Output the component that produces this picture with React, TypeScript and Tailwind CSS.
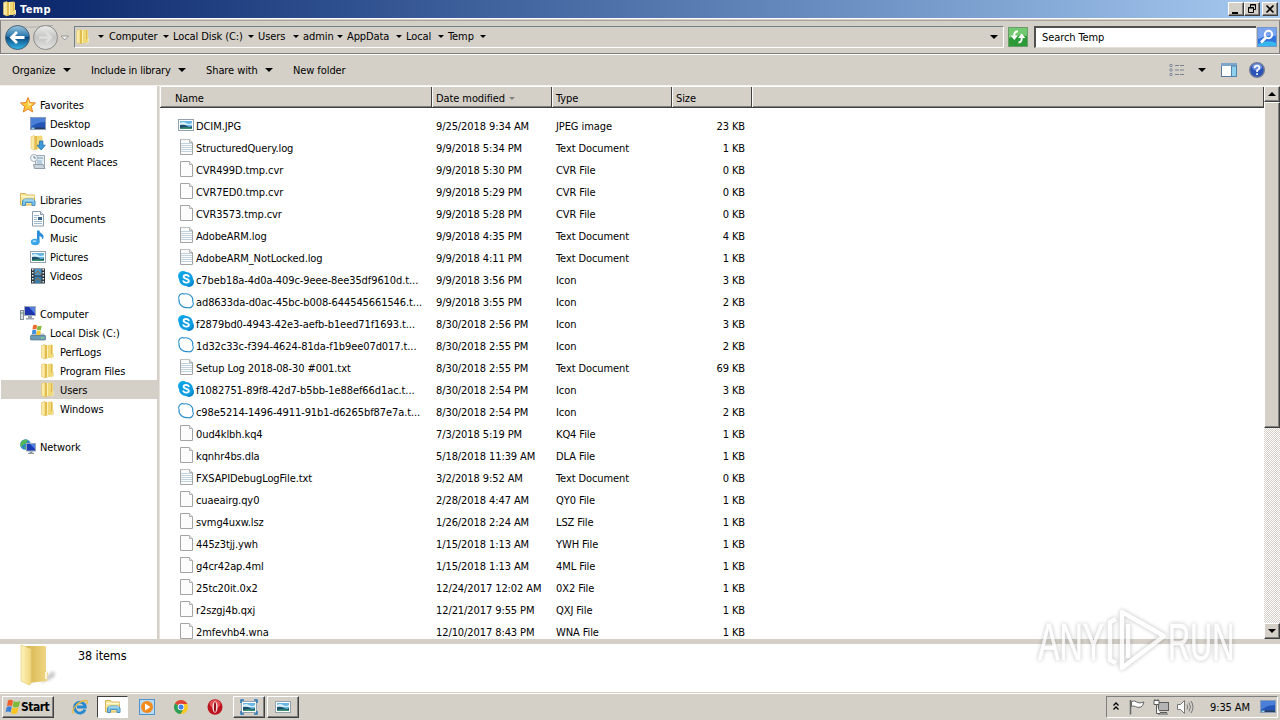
import React from 'react';

type IconName =
  | 'star' | 'desktop' | 'downloads' | 'recent' | 'libraries' | 'document' | 'music' | 'picture'
  | 'video' | 'computer' | 'disk' | 'folder' | 'network' | 'text' | 'blank' | 'skype' | 'skypeOutline';

const Icon: React.FC<{ name: IconName; className?: string }> = ({ name, className = '' }) => (
  <svg width="16" height="16" viewBox="0 0 16 16" className={`shrink-0 overflow-visible ${className}`}>
    {name === 'star' && (
      <>
        <path d="M8 .5l2 5 5.500.500-4.200 3.500 1.400 5.500L8 12l-4.700 3 1.400-5.500L.500 6 6 5.500z" fill="#fdc83c" stroke="#e5822a" strokeLinejoin="round" />
        <path d="M8 3l1.200 3.500 3.500.300L8 9z" fill="#fff0a8" />
      </>
    )}
    {name === 'desktop' && (
      <>
        <rect x="0.5" y="1.500" width="15" height="12" fill="#2456b8" stroke="#8a9cba" />
        <path d="M1 2h14v4Q7 6 1 11z" fill="#4a80d8" />
        <path d="M1 11.500h14V13H1z" fill="#2b3d5c" />
        <path d="M1.500 11.500h3V13h-3z" fill="#8fd4ef" />
      </>
    )}
    {name === 'folder' && (
      <>
        <path d="M1.500 1.500L5 .500v14.500l-3.500-1.500z" fill="#faeaa6" stroke="#e2c368" strokeWidth=".6" />
        <path d="M5 1h2.500v13.500L5 15z" fill="#e3bd4c" />
        <path d="M7.500 1l4-.500L13 1.500v11L11.500 14h-4z" fill="#f1d978" />
        <path d="M7.500 1v13" stroke="#fbf0ba" />
        <path d="M11.500 1v9" stroke="#dcb650" />
        <path d="M13.500 9v4.500l-2 1.500" fill="none" stroke="#efe6c0" />
      </>
    )}
    {name === 'downloads' && (
      <>
        <path d="M1 1.500L4.500.500v14.500L1 13.500z" fill="#faeaa6" stroke="#e2c368" strokeWidth=".6" />
        <path d="M4.500 1H7v13.500l-2.500.500z" fill="#e3bd4c" />
        <path d="M7 1l4-.500 1.500 1v11L11 14H7z" fill="#f1d978" />
        <path d="M9.500 6h3.400v4.200h2.400L11.200 15 7 10.200h2.500z" fill="#3f9ad8" stroke="#1e6fb4" strokeWidth=".8" />
      </>
    )}
    {name === 'recent' && (
      <>
        <path d="M5.500 1.500h9v11h-9z" fill="#e6edf2" stroke="#9aa8b2" />
        <path d="M3.500 10.500h9.500l2 4H4.500z" fill="#c9d4dc" stroke="#8f9eaa" />
        <path d="M7 7h5M7 9h5" stroke="#8ab0cc" />
        <path d="M8 3h5v2H8z" fill="#a6c2d5" />
        <circle cx="4" cy="4" r="3.500" fill="#f3f7fa" stroke="#a3b0b9" />
        <path d="M4 2v2h2" fill="none" stroke="#6f8494" />
      </>
    )}
    {name === 'libraries' && (
      <>
        <path d="M.500 1.500h5l1 1.500h8v10H.500z" fill="#f7e596" stroke="#d6b35a" />
        <path d="M1 4.500h13.500" stroke="#fff8d0" strokeWidth="1.500" />
        <path d="M2.500 13.500V9l2-2h8.500l2 2v4.500h-3v-3H5.500v3z" fill="#79c2e8" stroke="#4a91c2" />
        <path d="M4 8h10" stroke="#c8e9f8" />
      </>
    )}
    {name === 'document' && (
      <>
        <path d="M2.500.500h8l3 3v11.500h-11z" fill="#fff" stroke="#8b9cac" />
        <path d="M10.500.500v3h3" fill="#dde6ee" stroke="#8b9cac" />
        <path d="M4 4.500h5M4 6.500h3M4 8.500h3M4 10.500h8M4 12.500h8" stroke="#9db8d2" />
        <path d="M8 6h4v3H8z" fill="#35658f" />
      </>
    )}
    {name === 'music' && (
      <>
        <path d="M7 .500h2.500c0 3 4 3 4 6 0 1.500-.5 2.500-1.500 3 .5-2-.5-3-2.500-3.500V12.500H7z" fill="#2b8ed6" />
        <ellipse cx="5.200" cy="12" rx="4.300" ry="3.200" fill="#3ba4e6" />
        <ellipse cx="4.500" cy="11.200" rx="2" ry="1" fill="#a5dcf7" />
      </>
    )}
    {name === 'picture' && (
      <>
        <rect x="0.500" y="2.500" width="15" height="11" fill="#fff" stroke="#95a2ad" />
        <rect x="2" y="4" width="12" height="8" fill="#69b6e6" />
        <path d="M2 6q3-2 6 0t6 0v2H2z" fill="#d6eff9" />
        <path d="M2 8q4-1 7 1t5 0v3H2z" fill="#1d4f6c" />
        <path d="M2 11q5-1.500 12 0v1H2z" fill="#36926f" />
      </>
    )}
    {name === 'video' && (
      <>
        <rect x="1" y="0.500" width="14" height="15" fill="#28323a" />
        <rect x="4.500" y="1" width="7" height="6.500" fill="#4b97cc" />
        <rect x="4.500" y="8.500" width="7" height="6.500" fill="#377fae" />
        <path d="M5 6l3-3 3 4M5 13l3-3 3 4" stroke="#9c6a3c" fill="none" />
        <path d="M2.750 1v14M13.250 1v14" stroke="#e6edf0" strokeWidth="1.500" strokeDasharray="1.500 1.500" />
      </>
    )}
    {name === 'computer' && (
      <>
        <rect x="0.500" y="4.500" width="3" height="9" fill="#dbe0e5" stroke="#858f99" />
        <path d="M1 7h2" stroke="#4e9b55" />
        <rect x="4.500" y="0.500" width="11" height="9" fill="#1d35ae" stroke="#a6afbb" />
        <path d="M9 1h6v7z" fill="#537fe2" />
        <path d="M8 10h4v2H8zM6 12h8v1.500H6z" fill="#9aa3ad" />
      </>
    )}
    {name === 'disk' && (
      <>
        <path d="M2 8.500h12l1.500 3H.500z" fill="#b7c4cc" />
        <rect x="0.500" y="10.500" width="15" height="4.500" rx=".6" fill="#6a9ab4" stroke="#486778" strokeWidth=".6" />
        <path d="M11 13h3" stroke="#8bf27b" />
        <path d="M3 .500q2-1.500 4 0L6.500 4.500q-2-1-4 .200z" fill="#ee6a2b" />
        <path d="M7.600.800q2 1 4-.200L11 4.700q-2 1-4 0z" fill="#7fba3a" />
        <path d="M2.300 5.300q2-1 4 0L6 9.300q-2-1-4 .200z" fill="#3c8fdd" />
        <path d="M6.900 5.500q2 1 4-.100l-.5 4q-2 1-4 0z" fill="#fbc92c" />
      </>
    )}
    {name === 'network' && (
      <>
        <circle cx="5.500" cy="5.500" r="5.300" fill="#2f86cf" />
        <path d="M2 2q3-2.500 6-1L6 4.500 3 6 1 8.500Q-.5 4.500 2 2zM4 7.500l3 1-1 2.500z" fill="#55b855" />
        <rect x="6.500" y="4.500" width="9" height="7.500" fill="#1b3bb4" stroke="#9ba7b8" />
        <path d="M10 5h5v5z" fill="#4f7fe4" />
        <path d="M9.500 12.500h3V14h-3zM8 14h6v1H8z" fill="#8b96a2" />
      </>
    )}
    {(name === 'blank' || name === 'text') && (
      <>
        <path d="M2.500.500h9l3 3v12h-12z" fill="#fcfcfc" stroke="#a4a4a4" />
        <path d="M11.500.500v3h3" fill="#eee" stroke="#b4b4b4" />
      </>
    )}
    {name === 'text' && (
      <>
        <path d="M3 4.500h11M3 6.500h11M3 8.500h11M3 10.500h11M3 12.500h11" stroke="#c3d3dd" />
        <path d="M3.500 .500h10" stroke="#dcdcdc" strokeWidth="1.500" strokeDasharray="1 1" />
      </>
    )}
    {name === 'skype' && (
      <>
        <circle cx="5" cy="5" r="5" fill="#11aae9" />
        <circle cx="11" cy="11" r="5" fill="#0787cc" />
        <circle cx="8" cy="8" r="7" fill="#0d9fe2" />
        <path d="M10.800 5.400C9.800 3.400 5.600 3.500 5.600 5.800c0 2.600 5.300 1.400 5.300 4 0 2.400-4.600 2.400-5.600.3" stroke="#fff" strokeWidth="1.800" fill="none" strokeLinecap="round" />
      </>
    )}
    {name === 'skypeOutline' && (
      <path d="M1 6.500C-.5 3.500 2.500-.500 6 1c5-1 9.500 2.500 8.700 7 1.800 3.500-1.200 8-4.700 6.500C5 15.500.500 11.500 1 6.500z" fill="#fff" stroke="#2b8fca" strokeWidth="1.100" />
    )}
  </svg>
);

const Arrow: React.FC<{ className?: string; wide?: boolean }> = ({ className = '', wide }) => (
  <svg width={wide ? 8 : 6} height={wide ? 4 : 3} viewBox="0 0 8 4" className={`shrink-0 ${className}`}>
    <path d="M0 0h8L4 4z" fill="currentColor" />
  </svg>
);

const tree: ({ icon: IconName; label: string; indent: string; active?: boolean } | null)[] = [
  { icon: 'star', label: 'Favorites', indent: 'pl-5' },
  { icon: 'desktop', label: 'Desktop', indent: 'pl-[30px]' },
  { icon: 'downloads', label: 'Downloads', indent: 'pl-[30px]' },
  { icon: 'recent', label: 'Recent Places', indent: 'pl-[30px]' },
  null,
  { icon: 'libraries', label: 'Libraries', indent: 'pl-5' },
  { icon: 'document', label: 'Documents', indent: 'pl-[30px]' },
  { icon: 'music', label: 'Music', indent: 'pl-[30px]' },
  { icon: 'picture', label: 'Pictures', indent: 'pl-[30px]' },
  { icon: 'video', label: 'Videos', indent: 'pl-[30px]' },
  null,
  { icon: 'computer', label: 'Computer', indent: 'pl-5' },
  { icon: 'disk', label: 'Local Disk (C:)', indent: 'pl-[30px]' },
  { icon: 'folder', label: 'PerfLogs', indent: 'pl-10' },
  { icon: 'folder', label: 'Program Files', indent: 'pl-10' },
  { icon: 'folder', label: 'Users', indent: 'pl-10', active: true },
  { icon: 'folder', label: 'Windows', indent: 'pl-10' },
  null,
  { icon: 'network', label: 'Network', indent: 'pl-5' },
];

const files: [IconName, string, string, string, string][] = [
  ['picture', 'DCIM.JPG', '9/25/2018 9:34 AM', 'JPEG image', '23 KB'],
  ['text', 'StructuredQuery.log', '9/9/2018 5:34 PM', 'Text Document', '1 KB'],
  ['blank', 'CVR499D.tmp.cvr', '9/9/2018 5:30 PM', 'CVR File', '0 KB'],
  ['blank', 'CVR7ED0.tmp.cvr', '9/9/2018 5:29 PM', 'CVR File', '0 KB'],
  ['blank', 'CVR3573.tmp.cvr', '9/9/2018 5:28 PM', 'CVR File', '0 KB'],
  ['text', 'AdobeARM.log', '9/9/2018 4:35 PM', 'Text Document', '4 KB'],
  ['text', 'AdobeARM_NotLocked.log', '9/9/2018 4:11 PM', 'Text Document', '1 KB'],
  ['skype', 'c7beb18a-4d0a-409c-9eee-8ee35df9610d.t...', '9/9/2018 3:56 PM', 'Icon', '3 KB'],
  ['skypeOutline', 'ad8633da-d0ac-45bc-b008-644545661546.t...', '9/9/2018 3:55 PM', 'Icon', '2 KB'],
  ['skype', 'f2879bd0-4943-42e3-aefb-b1eed71f1693.t...', '8/30/2018 2:56 PM', 'Icon', '3 KB'],
  ['skypeOutline', '1d32c33c-f394-4624-81da-f1b9ee07d017.t...', '8/30/2018 2:55 PM', 'Icon', '2 KB'],
  ['text', 'Setup Log 2018-08-30 #001.txt', '8/30/2018 2:55 PM', 'Text Document', '69 KB'],
  ['skype', 'f1082751-89f8-42d7-b5bb-1e88ef66d1ac.t...', '8/30/2018 2:54 PM', 'Icon', '3 KB'],
  ['skypeOutline', 'c98e5214-1496-4911-91b1-d6265bf87e7a.t...', '8/30/2018 2:54 PM', 'Icon', '2 KB'],
  ['blank', '0ud4klbh.kq4', '7/3/2018 5:19 PM', 'KQ4 File', '1 KB'],
  ['blank', 'kqnhr4bs.dla', '5/18/2018 11:39 AM', 'DLA File', '1 KB'],
  ['text', 'FXSAPIDebugLogFile.txt', '3/2/2018 9:52 AM', 'Text Document', '0 KB'],
  ['blank', 'cuaeairg.qy0', '2/28/2018 4:47 AM', 'QY0 File', '1 KB'],
  ['blank', 'svmg4uxw.lsz', '1/26/2018 2:24 AM', 'LSZ File', '1 KB'],
  ['blank', '445z3tjj.ywh', '1/15/2018 1:13 AM', 'YWH File', '1 KB'],
  ['blank', 'g4cr42ap.4ml', '1/15/2018 1:13 AM', '4ML File', '1 KB'],
  ['blank', '25tc20it.0x2', '12/24/2017 12:02 AM', '0X2 File', '1 KB'],
  ['blank', 'r2szgj4b.qxj', '12/21/2017 9:55 PM', 'QXJ File', '1 KB'],
  ['blank', '2mfevhb4.wna', '12/10/2017 8:43 PM', 'WNA File', '1 KB'],
];

// label plus the width of the crumb, arrow included
const crumbs: [string, string][] = [
  ['Computer', 'w-[64px]'],
  ['Local Disk (C:)', 'w-[85px]'],
  ['Users', 'w-[45px]'],
  ['admin', 'w-[44px]'],
  ['AppData', 'w-[59px]'],
  ['Local', 'w-[42px]'],
  ['Temp', 'w-[42px]'],
];

const raised = 'bg-[#d4d0c8] border border-t-white border-l-white border-b-[#404040] border-r-[#404040] shadow-[inset_-1px_-1px_0_#808080]';

const TitleBar = () => (
  <div className="h-[18px] flex items-center pl-0.5 pr-0.5 bg-linear-to-r from-[#0a246a] to-[#a6caf0]">
    <Icon name="folder" />
    <span className="ml-0.5 text-white font-bold text-[11px] tracking-[0.4px]">Temp</span>
    <div className="ml-auto flex">
      <div className={`w-4 h-3.5 ${raised}`}>
        <svg width="14" height="12"><path d="M3 9h6v2H3z" /></svg>
      </div>
      <div className={`w-4 h-3.5 ${raised}`}>
        <svg width="14" height="12" fill="none" stroke="#000">
          <path d="M5.500 4V1.500h5v5H8.500M5 2h6M3.500 4.500h5v5h-5zM3 5h6" />
        </svg>
      </div>
      <div className={`w-4 h-3.5 ml-0.5 ${raised}`}>
        <svg width="14" height="12" stroke="#000" strokeWidth="1.600"><path d="M3.500 2.500l7 7M10.500 2.500l-7 7" /></svg>
      </div>
    </div>
  </div>
);

const AddressBar = () => (
  <div className="h-[36px] border-t border-white bg-[#d4d0c8]">
    <div className="h-[34px] mt-px flex items-center border border-r-[#808080] border-l-[#808080] border-t-[#a8a49c] border-b-[#808080] pl-[3px]">
      <svg width="72" height="30" viewBox="0 0 72 30" className="shrink-0 -mr-[2px]">
        <defs>
          <linearGradient id="back" x1="0" y1="0" x2="0" y2="1">
            <stop offset="0" stopColor="#9ac6e0" />
            <stop offset=".45" stopColor="#2a77ac" />
            <stop offset=".5" stopColor="#0b4a80" />
            <stop offset="1" stopColor="#35b8ea" />
          </linearGradient>
          <linearGradient id="fwd" x1="0" y1="0" x2="0" y2="1">
            <stop offset="0" stopColor="#ededeb" />
            <stop offset=".5" stopColor="#c4c4c2" />
            <stop offset="1" stopColor="#e4e4e2" />
          </linearGradient>
        </defs>
        <path d="M13 3.500Q26 7 41 3.500h8" stroke="#aeb0b0" fill="none" />
        <circle cx="13.500" cy="15.500" r="12" fill="url(#back)" stroke="#4b6479" />
        <path d="M20.500 15.500H8M13 10l-5.500 5.500L13 21" stroke="#fff" strokeWidth="2.800" fill="none" />
        <circle cx="41.500" cy="15.500" r="12" fill="url(#fwd)" stroke="#8b8b8b" />
        <path d="M35 15.500h11M42 10.500l5 5-5 5" stroke="#dededc" strokeWidth="2.500" fill="none" />
        <path d="M57 14h7.500l-3.750 4z" fill="#eee" stroke="#888" strokeWidth=".8" />
      </svg>
      <div className="w-[930px] h-[22px] flex items-center border-t border-l border-t-[#708088] border-l-[#708088] border-b border-b-white border-r border-r-white pb-px">
        <Icon name="folder" />
        <Arrow className="ml-[7px] mr-[5px]" />
        {crumbs.map(([label, width]) => (
          <div key={label} className={`${width} flex items-center justify-between pr-[5px] whitespace-nowrap`}>
            <span>{label}</span>
            <Arrow className="-mr-px" />
          </div>
        ))}
        <Arrow wide className="ml-auto mr-[5px]" />
      </div>
      <svg width="20" height="20" viewBox="0 0 20 20" className="ml-[4px] shrink-0">
        <rect x=".5" y=".5" width="19" height="19" fill="#2d9a38" stroke="#6c9c6c" />
        <path d="M1 1h18v8Q10 7 1 11z" fill="#73c96f" />
        <path d="M2.500 8.500h7.500L6.300 13zM10 11h7.500L13.700 6.500z" fill="#fff" />
        <path d="M10 4.500Q6 4 6.300 9M10.500 15.500q3.500 0 3.200-5" stroke="#fff" strokeWidth="2" fill="none" />
      </svg>
      <div className="ml-[6px] w-[222px] h-[22px] bg-white border-t-2 border-l-2 border-t-[#505050] border-l-[#505050] border-b border-b-[#e4e0d8] flex items-center pl-[6px]">
        Search Temp
      </div>
      <svg width="20" height="20" viewBox="0 0 20 20" className="ml-[1px] shrink-0">
        <rect x=".5" y=".5" width="19" height="19" fill="#3272dc" stroke="#7596cb" />
        <path d="M1 1h18v8Q10 8 1 12z" fill="#7aa5ee" />
        <path d="M1 19h18v-3Q10 12 1 17z" fill="#35b7ee" />
        <circle cx="11.500" cy="7.500" r="3.700" stroke="#fff" strokeWidth="2" fill="none" />
        <path d="M9 10.500L4 15.500" stroke="#fff" strokeWidth="2.600" />
      </svg>
    </div>
  </div>
);

const Toolbar = () => (
  <div className="h-[31px] flex items-center pl-3 pr-[15px] border-t border-white bg-[#d4d0c8]">
    <div className="w-[79px] flex items-center"><span className="w-[51px]">Organize</span><Arrow wide /></div>
    <div className="w-[115px] flex items-center"><span className="w-[87px] whitespace-nowrap tracking-[-0.200px]">Include in library</span><Arrow wide /></div>
    <div className="w-[87px] flex items-center"><span className="w-[59px] whitespace-nowrap">Share with</span><Arrow wide /></div>
    <span>New folder</span>
    <div className="ml-auto flex items-center">
      <svg width="16" height="14" viewBox="0 0 16 14" fill="none">
        <path d="M1 1.500h2v2H1zM1 6h2v2H1zM1 10.500h2v2H1z" fill="#fff" stroke="#7d8794" />
        <path d="M6 2.500h10M6 7h10M6 11.500h10" stroke="#78828f" strokeDasharray="4 1" />
      </svg>
      <Arrow wide className="ml-[13px]" />
      <svg width="16" height="14" viewBox="0 0 16 14" className="ml-[15px]">
        <rect x=".5" y=".5" width="15" height="13" fill="#fff" stroke="#58789c" />
        <path d="M0 0h16v3H0z" fill="#7fa5ca" />
        <rect x="10.500" y="3" width="5" height="10.500" fill="#8ed1ee" stroke="#4f83aa" />
      </svg>
      <svg width="16" height="16" viewBox="0 0 16 16" className="ml-[12px]">
        <circle cx="8" cy="8" r="7.300" fill="#2a52b8" stroke="#707b9c" strokeWidth="1.400" />
        <ellipse cx="8" cy="5" rx="5" ry="3.500" fill="#6e92e0" />
        <path d="M5.600 6q.2-2.300 2.500-2.300t2.300 2Q10.400 7 8.100 8.500V10M8.100 11.200v1.700" fill="none" stroke="#fff" strokeWidth="1.700" />
      </svg>
    </div>
  </div>
);

const Sidebar = () => (
  <div className="w-[157px] bg-white pt-[9px]">
    {tree.map((item, i) => (
      <div key={i} className={`h-[19px] ml-px flex items-center ${item?.active ? 'bg-[#d4d0c8]' : ''}`}>
        {item && (
          <div className={`flex items-center -ml-px whitespace-nowrap ${item.indent}`}>
            <Icon name={item.icon} />
            <span className="ml-1 pt-[2px]">{item.label}</span>
          </div>
        )}
      </div>
    ))}
  </div>
);

const headCell = 'h-full flex items-center border-r border-r-[#404040] border-l border-l-white pl-[3px] pt-0.5';

const FileList = () => (
  <div className="flex-1 bg-white overflow-hidden">
    <div className="h-[22px] flex bg-[#d4d0c8] border-t border-t-white border-b border-b-[#404040] shadow-[inset_0_-1px_0_#808080]">
      <div className="w-[272px] h-full flex items-center border-r border-r-[#404040] border-l border-l-white pl-3.5 pt-0.5">Name</div>
      <div className={`${headCell} w-[120px]`}>Date modified <Arrow className="ml-[4px] text-[#808080]" /></div>
      <div className={`${headCell} w-[120px]`}>Type</div>
      <div className={`${headCell} w-[80px]`}>Size</div>
      <div className={`${headCell} flex-1`} />
    </div>
    <div className="pt-[7px]">
      {files.map(([icon, name, date, type, size]) => (
        <div key={name} className="h-[22px] flex items-center whitespace-nowrap">
          <div className="w-[276px] pl-[18px] flex items-center">
            <Icon name={icon} className="-mt-px mb-px" />
            <span className="ml-0.5">{name}</span>
          </div>
          <div className="w-[120px]">{date}</div>
          <div className="w-[120px]">{type}</div>
          <div className="w-[69px] text-right">{size}</div>
        </div>
      ))}
    </div>
  </div>
);

const ScrollBar = () => (
  <div className="w-4 flex flex-col bg-[repeating-conic-gradient(#d4d0c8_0_25%,#ffffff_0_50%)] bg-[length:2px_2px]">
    <div className={`h-4 flex items-center justify-center ${raised}`}><Arrow wide className="rotate-180" /></div>
    <div className={`h-[326px] ${raised}`} />
    <div className={`h-4 mt-auto flex items-center justify-center ${raised}`}><Arrow wide /></div>
  </div>
);

const StatusPane = () => (
  <div className="h-[49px] bg-white flex border-b border-[#d4d0c8]">
    <svg width="60" height="48" viewBox="0 0 60 48">
      <defs>
        <linearGradient id="front" x1="0" x2="1">
          <stop offset="0" stopColor="#fff3bd" />
          <stop offset="1" stopColor="#efd67d" />
        </linearGradient>
        <linearGradient id="rear" x1="0" x2="1">
          <stop offset="0" stopColor="#d7b34c" />
          <stop offset="1" stopColor="#f0da87" />
        </linearGradient>
        <filter id="soft"><feGaussianBlur stdDeviation="1.800" /></filter>
      </defs>
      <path d="M42 36l11-9q5 4-2 8l-10 4z" fill="#c9c9c9" filter="url(#soft)" />
      <path d="M26 2h19l1 1v24l2 2-1 8-18 2z" fill="url(#rear)" />
      <path d="M21 1l10 4v35l-2 1-8-4z" fill="url(#front)" stroke="#e4ce7f" strokeWidth=".7" />
      <path d="M46 28v7" stroke="#fff" strokeWidth="1.500" />
    </svg>
    <span className="ml-[18px] mt-[4px] text-[12.500px] leading-4">38 items</span>
  </div>
);

const Taskbar = () => (
  <div className="h-[27px] flex items-center bg-[#d4d0c8] border-t border-white">
    <div className={`w-[52px] h-[22px] ml-0.5 flex items-center pl-[2px] font-bold text-xs ${raised}`}>
      <svg width="16" height="16" viewBox="0 0 16 16" className="shrink-0">
        <path d="M3 1.500q2.500-1.800 5 .2L7 7.200q-2.500-1.500-5 0z" fill="#ee5f2a" />
        <path d="M8.700 2q2.800 1.800 6.500 0l-1.400 5.500q-3 1.800-6 0z" fill="#7cba39" />
        <path d="M1.800 8q2.500-1.500 5 0L5.500 13.500q-2.500-1.800-5 0z" fill="#3d80d6" />
        <path d="M7.300 8.300q3 1.800 6.300 0L12.200 14q-3 1.800-6.300 0z" fill="#f9c524" />
      </svg>
      <span className="tracking-[-0.500px]">Start</span>
    </div>
    <svg width="16" height="16" viewBox="0 0 16 16" className="ml-[18px]">
      <path d="M13 10.500A5.400 5.400 0 1 1 13.300 8H5" fill="none" stroke="#2688cf" strokeWidth="2.800" />
      <path d="M1.500 14.500C-1 11 6 1.500 14.500 1.500c1.500.5.5 3 0 3.500" fill="none" stroke="#e8b93b" strokeWidth="1.300" />
    </svg>
    <div className="ml-[9px] w-[31px] h-[22px] flex items-center justify-center bg-white border border-t-[#404040] border-l-[#404040] border-b-white border-r-white">
      <Icon name="libraries" />
    </div>
    <svg width="16" height="16" viewBox="0 0 16 16" className="ml-[11px]">
      <rect x=".5" y=".5" width="15" height="15" fill="#b9daf2" stroke="#4d94cf" />
      <circle cx="8" cy="8" r="6" fill="#f28a1c" />
      <path d="M6 4.500v7L11.500 8z" fill="#fff" />
    </svg>
    <svg width="16" height="16" viewBox="0 0 16 16" className="ml-[18px]">
      <circle cx="8" cy="8" r="7" fill="#f7c921" />
      <path d="M8 8L1.900 4.500A7 7 0 0 1 14.100 4.500H8z" fill="#dd4437" />
      <path d="M1.900 4.500A7 7 0 0 0 7.500 15l3-5L8 8z" fill="#2d9e57" />
      <path d="M8 4.500h6.100" stroke="#dd4437" strokeWidth="1" />
      <circle cx="8" cy="8" r="3.300" fill="#fff" />
      <circle cx="8" cy="8" r="2.500" fill="#4480e5" />
    </svg>
    <svg width="16" height="16" viewBox="0 0 16 16" className="ml-[18px]">
      <ellipse cx="8" cy="8" rx="7.500" ry="7.800" fill="#bd1420" />
      <ellipse cx="8" cy="5" rx="5.500" ry="4" fill="#e14d50" />
      <ellipse cx="8" cy="8" rx="2.600" ry="5.800" fill="#f7e3e3" />
      <ellipse cx="8" cy="8" rx="1.100" ry="5" fill="#961019" />
    </svg>
    <div className={`ml-[10px] w-8 h-[22px] flex items-center justify-center ${raised}`}>
      <div className="relative">
        <Icon name="picture" />
        <svg width="18" height="16" className="absolute -left-px top-0" fill="none" stroke="#2777b8" strokeWidth="1.500">
          <path d="M1 4V1h3M14 1h3v3M1 12v3h3M14 15h3v-3" />
        </svg>
      </div>
    </div>
    <div className={`ml-0.5 w-8 h-[22px] flex items-center justify-center ${raised}`}><Icon name="picture" /></div>

    <div className="ml-auto mr-0.5 w-[172px] h-[22px] flex items-center border border-t-[#808080] border-l-[#808080] border-b-white border-r-white pl-[6px]">
      <svg width="6" height="8" fill="none" stroke="#000" strokeWidth="1.300" className="mb-0.5"><path d="M.500 3.500L3 1l2.500 2.500M.500 7.500L3 5l2.500 2.500" /></svg>
      <svg width="16" height="16" className="ml-[10px]" fill="#fff" stroke="#666">
        <path d="M1.500 1v14.500" strokeWidth="1.500" />
        <path d="M2.500 2.500q3-1.500 5 .500 3 2 7.500 0-1 4-3 5-3.500 1-5.500-.500-2-1-4 0z" />
      </svg>
      <svg width="16" height="16" className="ml-2" fill="#fff" stroke="#5c5c5c">
        <rect x="5.500" y="3.500" width="10" height="8" fill="#b4b4b4" />
        <path d="M7 13.500h7M5 15h10" />
        <path d="M1 1.500h5v4H1zM2 0v2M5 0v2M3.500 6v8.500H7" />
      </svg>
      <svg width="17" height="16" className="ml-2" fill="none" stroke="#777">
        <path d="M.500 5.500h3l4-4v13l-4-4h-3z" fill="#fff" />
        <path d="M10 5.500q1.500 2.500 0 5M12 3.500q3 4.500 0 9M14 2q4 6 0 12" />
      </svg>
      <span className="ml-auto mr-[10px] whitespace-nowrap">9:35 AM</span>
      <span className="mr-px flex"><Icon name="desktop" /></span>
    </div>
  </div>
);

const Watermark = () => (
  <svg width="220" height="80" viewBox="0 0 220 80" className="absolute left-[1030px] top-[602px] overflow-visible opacity-75 pointer-events-none drop-shadow-[0_0_2px_rgba(0,0,0,0.35)]">
    <g fill="#fff" stroke="#fff" strokeWidth=".6" fontFamily="Liberation Sans Narrow, Liberation Sans, sans-serif" fontSize="52">
      <text transform="translate(8 58) scale(.62 1)">ANY</text>
      <text transform="translate(138 58) scale(.59 1)">RUN</text>
    </g>
    <path d="M86 17l-6 3v38l6 3M92 10v56l42-32zM98 22v34" fill="none" stroke="#fff" strokeWidth="4.500" strokeLinejoin="round" />
  </svg>
);

const App: React.FC = () => {
  return (
    <div className="relative w-[1280px] h-[720px] overflow-hidden flex flex-col bg-[#d4d0c8] text-black text-[11px] leading-[13px] tracking-[-0.090px] font-['DejaVu_Sans_Condensed','DejaVu_Sans',sans-serif]">
      <TitleBar />
      <AddressBar />
      <Toolbar />
      <div className="flex h-[554px] border-t border-[#f4f2ee]">
        <Sidebar />
        <div className="w-[3px] bg-[#d4d0c8] border-r border-[#e6e3de]" />
        <FileList />
        <ScrollBar />
      </div>
      <div className="h-[5px] bg-[#d4d0c8]" />
      <StatusPane />
      <Taskbar />
      <Watermark />
    </div>
  );
};

export default App;
